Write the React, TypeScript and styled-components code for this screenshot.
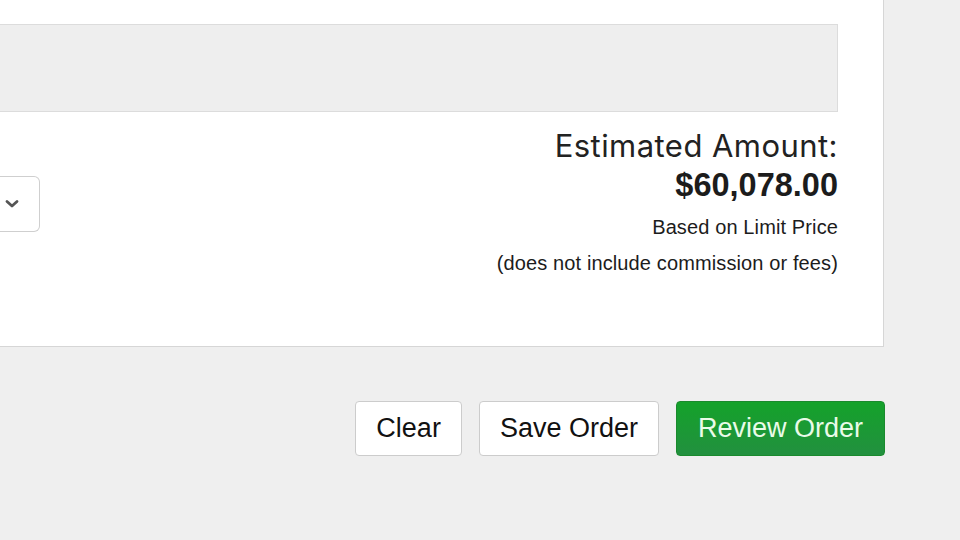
import React from "react";
import styled, { createGlobalStyle } from "styled-components";

const Global = createGlobalStyle`
  html, body { margin: 0; padding: 0; background: #efefef; }
  #root { width: 960px; height: 540px; overflow: hidden; }
`;

const Page = styled.div`
  width: 960px;
  height: 540px;
  overflow: hidden;
  background: #efefef;
  font-family: "Liberation Sans", Arial, sans-serif;
  color: #1a1a1a;
`;

const Card = styled.section`
  box-sizing: border-box;
  margin: -20px 76px 0 -20px;
  height: 367px;
  padding: 44px 45px 0 0;
  background: #ffffff;
  border-right: 1px solid #d6d6d6;
  border-bottom: 1px solid #d6d6d6;
`;

const InfoBar = styled.div`
  box-sizing: border-box;
  height: 88px;
  background: #eeeeee;
  border: 1px solid #dcdcdc;
  border-left: none;
`;

const Row = styled.div`
  display: flex;
  justify-content: space-between;
  align-items: flex-start;
  margin-top: 16px;
`;

const Select = styled.div`
  box-sizing: border-box;
  margin-top: 48px;
  width: 60px;
  height: 56px;
  border: 1px solid #cfcfcf;
  border-left: none;
  border-radius: 0 6px 6px 0;
  display: flex;
  align-items: center;
  justify-content: flex-end;
  padding-right: 20px;
  background: #fff;
`;

const Summary = styled.div`
  display: flex;
  flex-direction: column;
  align-items: flex-end;
  text-align: right;
`;

const Label = styled.div`
  font-family: Inter, "Liberation Sans", sans-serif;
  font-size: 31px;
  line-height: 36px;
  font-weight: 400;
  letter-spacing: 0.45px;
  color: #222;
`;

const Amount = styled.div`
  margin-top: 3px;
  font-size: 32.5px;
  line-height: 36px;
  font-weight: 700;
  color: #1c1c1c;
`;

const Note = styled.div<{ $gap: number }>`
  margin-top: ${(p) => p.$gap}px;
  font-size: 20px;
  line-height: 24px;
  letter-spacing: 0.12px;
  color: #1c1c1c;
`;

const Actions = styled.div`
  display: flex;
  justify-content: flex-end;
  gap: 17px;
  margin-top: 54px;
  padding-right: 75px;
`;

const Button = styled.button<{ $primary?: boolean }>`
  box-sizing: border-box;
  height: 55px;
  padding: 0 ${(p) => (p.$primary ? 21 : 20)}px;
  font-family: "Liberation Sans", Arial, sans-serif;
  font-size: 27px;
  border-radius: 4px;
  border: 1px solid ${(p) => (p.$primary ? "#1a8a2d" : "#cccccc")};
  background: ${(p) => (p.$primary ? "linear-gradient(#14a22a, #22903f)" : "#ffffff")};
  color: ${(p) => (p.$primary ? "#eafbe9" : "#111111")};
  cursor: pointer;
`;

export default function App() {
  return (
    <Page>
      <Global />
      <Card>
        <InfoBar />
        <Row>
          <Select>
            <svg width="14" height="10" viewBox="0 0 14 10">
              <polyline points="2,2.5 7,7 12,2.5" fill="none" stroke="#555" strokeWidth="2.8" strokeLinecap="round" strokeLinejoin="round" />
            </svg>
          </Select>
          <Summary>
            <Label>Estimated Amount:</Label>
            <Amount>$60,078.00</Amount>
            <Note $gap={12}>Based on Limit Price</Note>
            <Note $gap={12}>(does not include commission or fees)</Note>
          </Summary>
        </Row>
      </Card>
      <Actions>
        <Button>Clear</Button>
        <Button>Save Order</Button>
        <Button $primary>Review Order</Button>
      </Actions>
    </Page>
  );
}
